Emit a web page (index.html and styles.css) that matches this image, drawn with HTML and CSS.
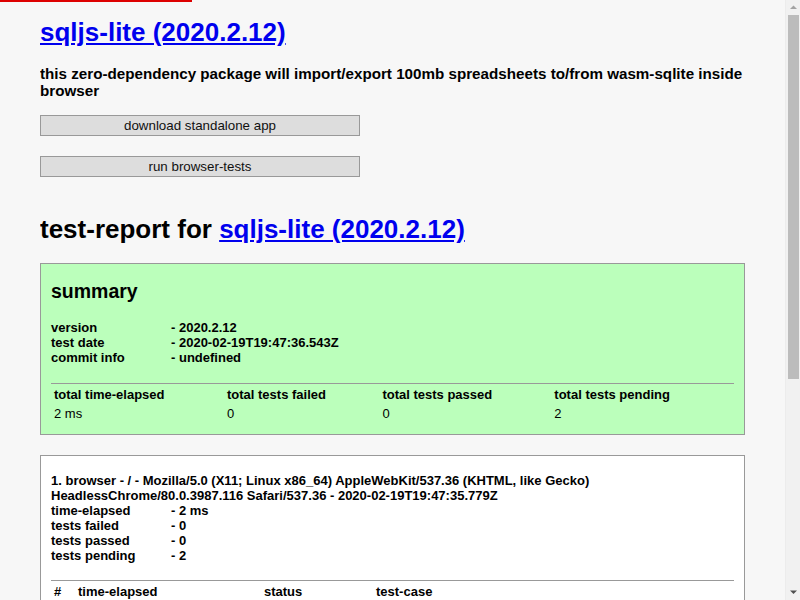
FILE: index.html
```html
<!DOCTYPE html>
<html lang="en">
<head>
<meta charset="utf-8">
<title>sqljs-lite (2020.2.12)</title>
<link rel="stylesheet" href="styles.css">
</head>
<body>
<div class="progress-bar"></div>
<div class="scrollbar" aria-hidden="true">
  <svg class="scroll-arrow up" width="15" height="15" viewBox="0 0 15 15"><path d="M4 9 L11 9 L7.5 5.5 Z" fill="#a3a3a3"/></svg>
  <div class="scroll-thumb"></div>
  <svg class="scroll-arrow down" width="15" height="15" viewBox="0 0 15 15"><path d="M4 5.5 L11 5.5 L7.5 9 Z" fill="#505050"/></svg>
</div>
<h1 class="title"><a href="#">sqljs-lite (2020.2.12)</a></h1>
<h3 class="description">this zero-dependency package will import/export 100mb spreadsheets to/from wasm-sqlite inside browser</h3>
<div class="actions">
  <button class="action-button">download standalone app</button>
  <button class="action-button">run browser-tests</button>
</div>
<div class="test-report">
  <h1 class="report-title">test-report for <a href="#">sqljs-lite (2020.2.12)</a></h1>
  <div class="platform summary">
    <h2 class="summary-title">summary</h2>
    <h4 class="info">
      <span class="label">version</span>- 2020.2.12<br>
      <span class="label">test date</span>- 2020-02-19T19:47:36.543Z<br>
      <span class="label">commit info</span>- undefined<br>
    </h4>
    <table class="report-table">
      <thead>
        <tr>
          <th>total time-elapsed</th>
          <th>total tests failed</th>
          <th>total tests passed</th>
          <th>total tests pending</th>
        </tr>
      </thead>
      <tbody>
        <tr>
          <td>2 ms</td>
          <td>0</td>
          <td>0</td>
          <td>2</td>
        </tr>
      </tbody>
    </table>
  </div>
  <div class="platform">
    <h4 class="info">
      1. browser - / - Mozilla/5.0 (X11; Linux x86_64) AppleWebKit/537.36 (KHTML, like Gecko) HeadlessChrome/80.0.3987.116 Safari/537.36 - 2020-02-19T19:47:35.779Z<br>
      <span class="label">time-elapsed</span>- 2 ms<br>
      <span class="label">tests failed</span>- 0<br>
      <span class="label">tests passed</span>- 0<br>
      <span class="label">tests pending</span>- 2<br>
    </h4>
    <table class="report-table cases">
      <thead>
        <tr>
          <th class="col-num">#</th>
          <th class="col-time">time-elapsed</th>
          <th class="col-status">status</th>
          <th>test-case</th>
        </tr>
      </thead>
      <tbody>
        <tr class="test-pending">
          <td>1</td>
          <td>0 ms</td>
          <td>pending</td>
          <td>testCase_sqljs_default</td>
        </tr>
        <tr class="test-pending">
          <td>2</td>
          <td>0 ms</td>
          <td>pending</td>
          <td>testCase_sqljs_export</td>
        </tr>
      </tbody>
    </table>
  </div>
</div>
<div class="footer">
  [ this app was created with <a href="#">utility2</a> ]
</div>
</body>
</html>
```

FILE: styles.css
```css
html {
  background: #f7f7f7;
}

body {
  margin: 0 55px 0 40px;
  font-family: "Liberation Sans", Arial, sans-serif;
  font-size: 13px;
  color: #000;
  background: #f7f7f7;
}

a {
  color: #00e;
}

.progress-bar {
  position: fixed;
  top: 0;
  left: 0;
  width: 192px;
  height: 2px;
  background: #dd0000;
  z-index: 2;
}

.scrollbar {
  position: fixed;
  top: 0;
  right: 0;
  width: 15px;
  height: 600px;
  background: #f1f1f1;
  border-left: 1px solid #ececec;
  box-sizing: border-box;
  display: flex;
  flex-direction: column;
  align-items: center;
}

.scroll-arrow {
  display: block;
  flex: none;
}

.scroll-arrow.down {
  margin-top: auto;
}

.scroll-thumb {
  width: 11px;
  height: 364px;
  background: #bcbcbc;
  margin-left: 1px;
}

.title {
  font-size: 26px;
  margin: 17.4px 0 16.4px;
}

.report-title {
  font-size: 26px;
  margin: 17.4px 0;
}

.description {
  font-size: 15.2px;
  margin: 15.2px 0 16.2px;
}

.actions {
  display: flex;
  flex-direction: column;
  align-items: flex-start;
  gap: 20px;
  padding-bottom: 20px;
}

.action-button {
  width: 320px;
  height: 21px;
  padding: 2px 6px;
  font-family: "Liberation Sans", Arial, sans-serif;
  font-size: 13.33px;
  color: #111;
  background: #dddddd;
  border: 1px solid #999;
  border-radius: 0;
  cursor: pointer;
}

.platform {
  background: #fff;
  border: 1px solid #999;
  margin-bottom: 20px;
  padding: 0 10px 10px 10px;
}

.summary {
  background: #bbffbb;
}

.summary-title {
  font-size: 19.5px;
  margin: 16.2px 0;
}

.info {
  font-size: 13px;
  margin: 17.3px 0;
}

.label {
  display: inline-block;
  width: 120px;
}

.report-table {
  width: 100%;
  border-top: 1px solid #999;
  text-align: left;
  font-size: 13px;
}

.report-table th,
.report-table td {
  padding: 1px;
}

.cases {
  table-layout: fixed;
}

.col-num {
  width: 20px;
}

.col-time {
  width: 182px;
}

.col-status {
  width: 108px;
}

.test-pending {
  background: #99f;
}

.footer {
  text-align: center;
  padding: 200px 0 40px;
}
```
